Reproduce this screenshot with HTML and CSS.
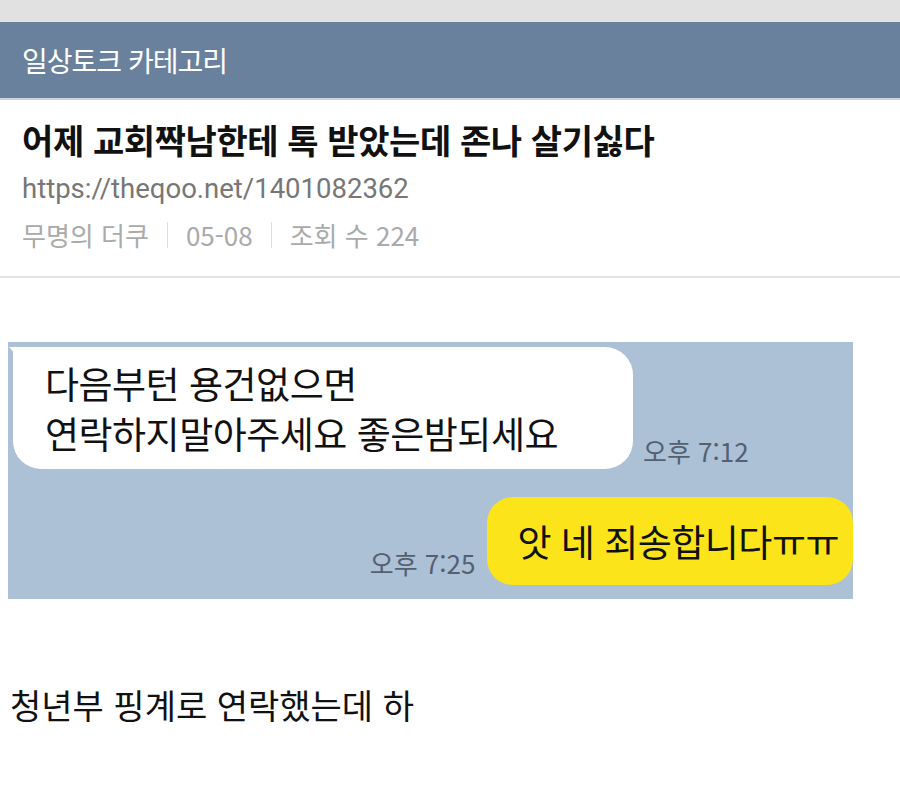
FILE: index.html
```html
<!DOCTYPE html>
<html lang="ko">

<head>
    <meta charset="UTF-8">
    <meta name="viewport" content="width=device-width, initial-scale=1.0">
    <link rel="stylesheet" href="styles.css">
    <title>일상토크</title>
</head>

<body>
    <div class="topbar"></div>
    <header class="category">
        <span>일상토크 카테고리</span>
    </header>
    <section class="post-info">
        <h1 class="post-title">어제 교회짝남한테 톡 받았는데 존나 살기싫다</h1>
        <div class="post-url">https://theqoo.net/1401082362</div>
        <div class="post-meta">
            <span>무명의 더쿠</span>
            <span class="sep"></span>
            <span>05-08</span>
            <span class="sep"></span>
            <span>조회 수 224</span>
        </div>
    </section>
    <section class="post-body">
        <div class="chat">
            <div class="row left">
                <div class="bubble white">다음부턴 용건없으면<br>연락하지말아주세요 좋은밤되세요</div>
                <span class="time">오후 7:12</span>
            </div>
            <div class="row right">
                <span class="time">오후 7:25</span>
                <div class="bubble yellow">앗 네 죄송합니다ㅠㅠ</div>
            </div>
        </div>
        <p class="text">청년부 핑계로 연락했는데 하</p>
    </section>
</body>

</html>
```

FILE: styles.css
```css
body {
    margin: 0;
    font-family: "Noto Sans CJK KR", "Noto Sans", sans-serif;
    color: #111;
    background: #fff;
}

.topbar {
    height: 22px;
    background-color: #e1e1e1;
}

.category {
    height: 76px;
    background-color: #6a819d;
    border-bottom: 2px solid #c9d5e2;
    display: flex;
    align-items: center;
    padding-left: 22px;
}

.category span {
    color: #fff;
    font-size: 28px;
    letter-spacing: -1px;
}

.post-info {
    padding: 17px 22px 18px;
    border-bottom: 2px solid #e2e2e2;
}

.post-title {
    margin: 0;
    font-size: 34px;
    font-weight: bold;
    line-height: 46px;
    letter-spacing: -0.4px;
}

.post-url {
    margin-top: 3px;
    font-family: Roboto, "Noto Sans", sans-serif;
    font-size: 27.5px;
    color: #777;
    line-height: 46px;
}

.post-meta {
    display: flex;
    align-items: center;
    font-size: 26px;
    color: #aaa;
    line-height: 46px;
}

.post-meta .sep {
    width: 1px;
    height: 26px;
    background-color: #ddd;
    margin: 0 18px;
}

.post-body {
    padding: 64px 0 0;
}

.chat {
    margin-left: 8px;
    width: 845px;
    height: 257px;
    background-color: #acc1d6;
    box-sizing: border-box;
    padding: 5px 0 0 5px;
    display: flex;
    flex-direction: column;
    gap: 28px;
}

.row {
    display: flex;
    align-items: flex-end;
    gap: 10px;
}

.row.right {
    justify-content: flex-end;
    gap: 12px;
}

.bubble {
    font-size: 37px;
    line-height: 50px;
    letter-spacing: -0.5px;
    color: #111;
}

.bubble.white {
    position: relative;
    background-color: #fff;
    border-radius: 28px;
    border-top-left-radius: 4px;
    padding: 11px 36px 11px 32px;
    width: 552px;
}

/* small tail on the top-left corner */
.bubble.white::before {
    content: "";
    position: absolute;
    left: -4px;
    top: 0;
    border-top: 9px solid #fff;
    border-left: 8px solid transparent;
}

.bubble.yellow {
    background-color: #fbe41a;
    border-radius: 26px;
    padding: 19px 14px 19px 30px;
}

.time {
    font-size: 26px;
    color: #536070;
}

.row.right .time {
    padding-bottom: 4px;
}

.text {
    margin: 86px 0 0 10px;
    font-size: 34px;
    line-height: 40px;
}
```
